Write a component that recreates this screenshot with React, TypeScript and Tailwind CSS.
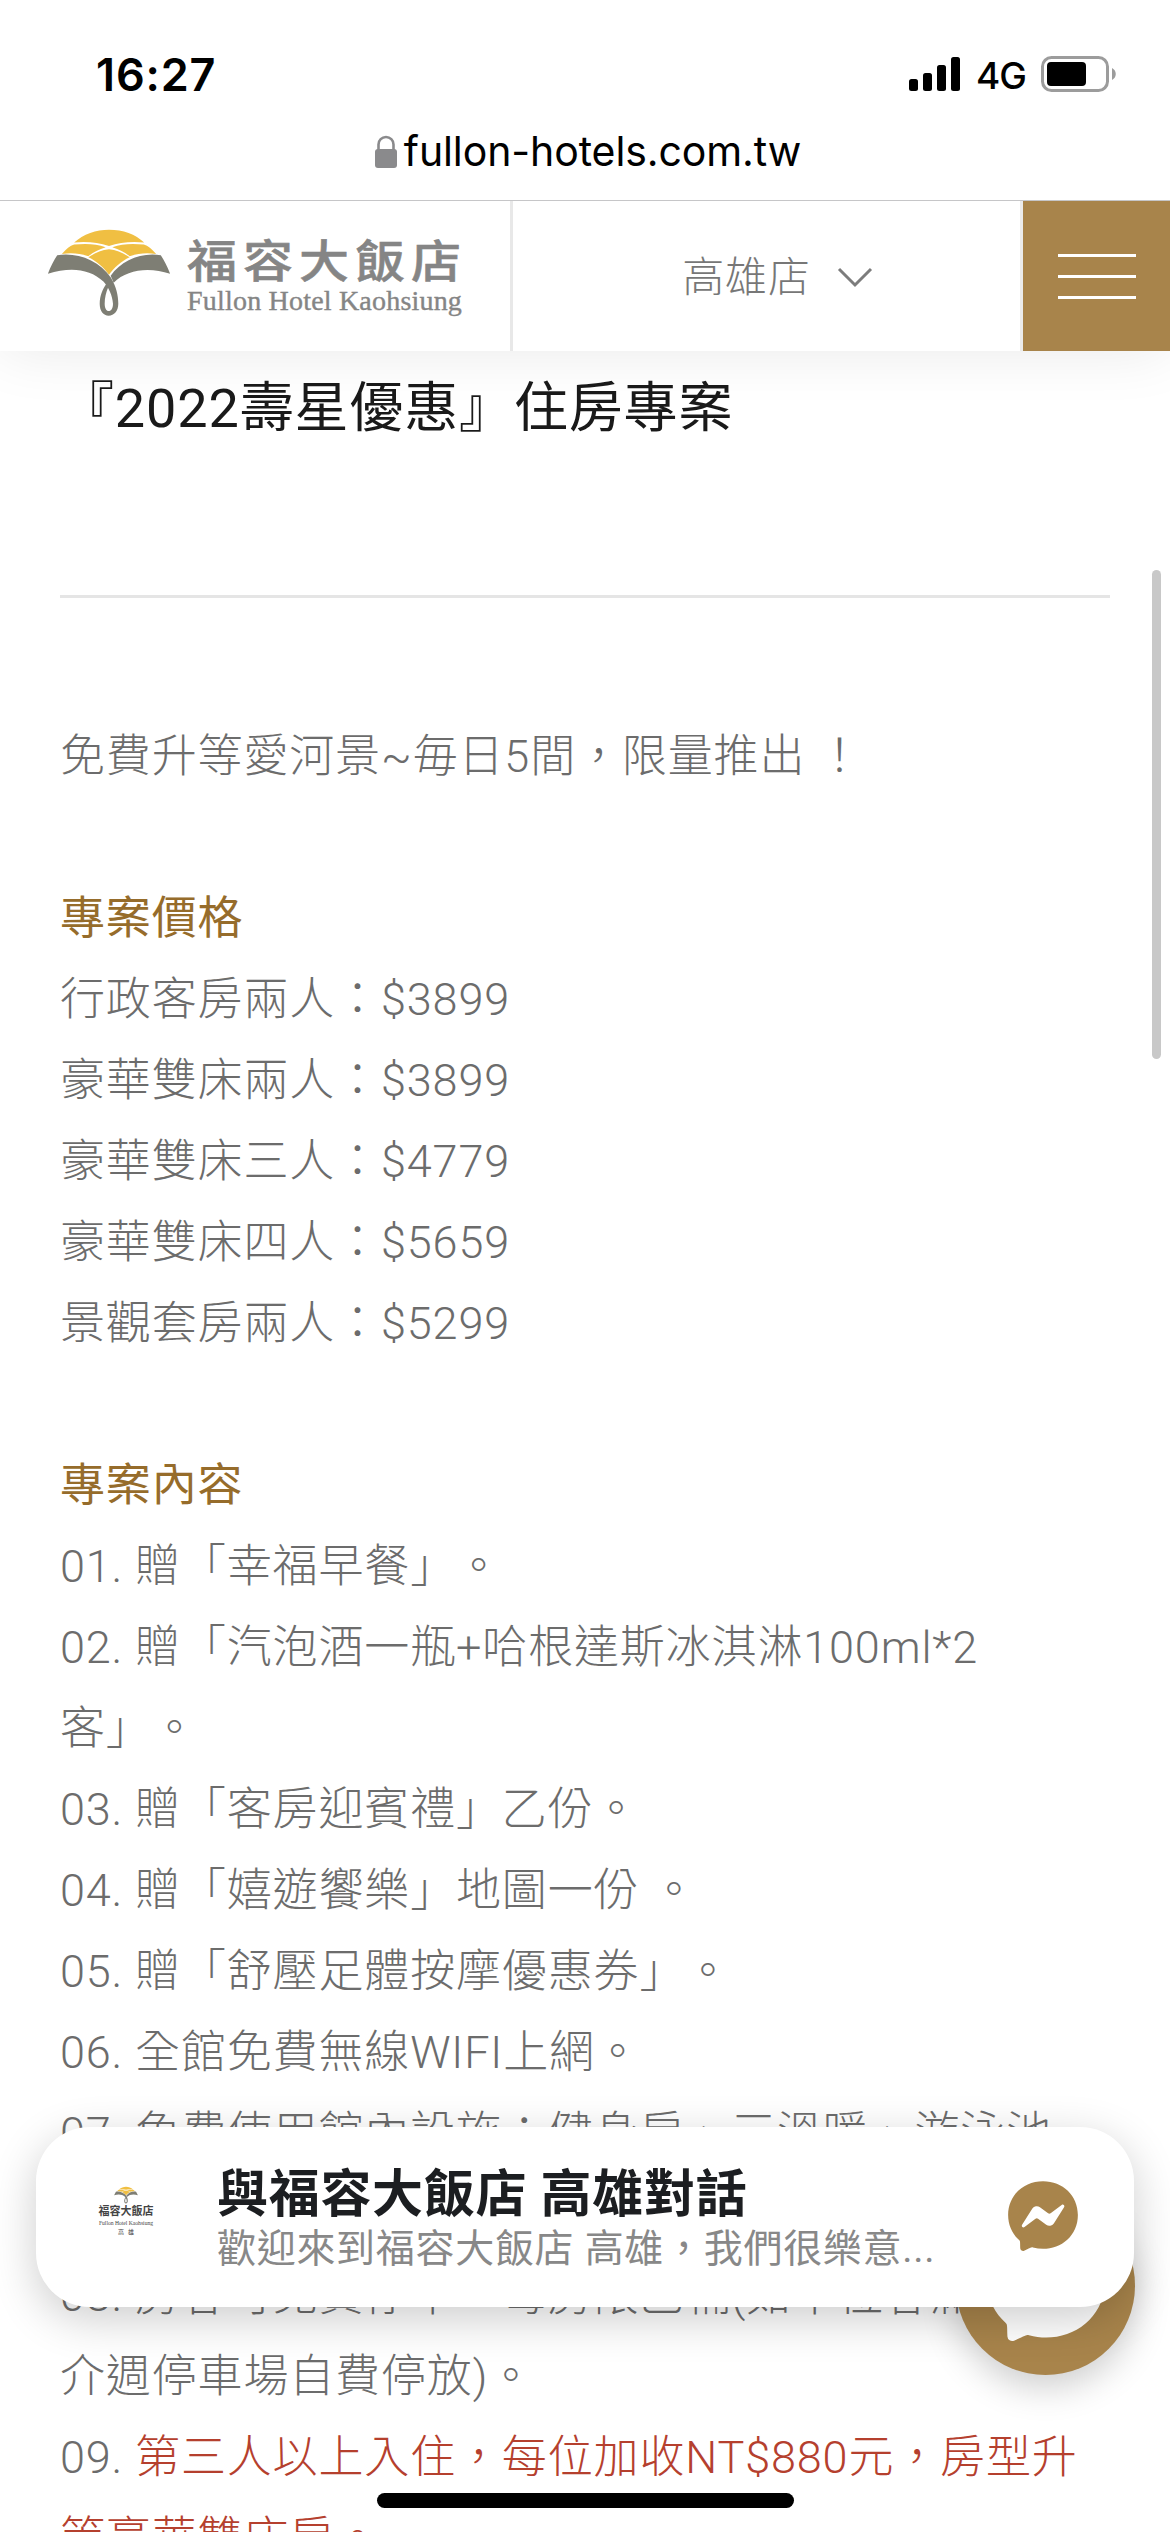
import { FaFacebookMessenger } from 'react-icons/fa';

const prices = [
  '行政客房兩人：$3899',
  '豪華雙床兩人：$3899',
  '豪華雙床三人：$4779',
  '豪華雙床四人：$5659',
  '景觀套房兩人：$5299',
];

const contents = [
  ['01. 贈「幸福早餐」。'],
  ['02. 贈「汽泡酒一瓶+哈根達斯冰淇淋100ml*2', '客」。'],
  ['03. 贈「客房迎賓禮」乙份。'],
  ['04. 贈「嬉遊饗樂」地圖一份 。'],
  ['05. 贈「舒壓足體按摩優惠券」。'],
  ['06. 全館免費無線WIFI上網。'],
  ['07. 免費使用館內設施：健身房、三溫暖、游泳池', '、兒童遊戲室。'],
  ['08. 房客可免費停車，每房限乙輛(如車位客滿可', '介週停車場自費停放)。'],
];

const StatusBar = () => (
  <div className="flex h-[108px] items-end justify-between pl-[96px] pr-[53px] font-[Inter] text-black">
    <span className="text-[45px] leading-[66px] font-semibold">16:27</span>
    <div className="flex h-[68px] items-center">
      <svg width="52" height="34" viewBox="0 0 52 34">
        <rect x="0" y="22" width="9" height="12" rx="2.5" />
        <rect x="14" y="16" width="9" height="18" rx="2.5" />
        <rect x="28" y="8" width="9" height="26" rx="2.5" />
        <rect x="42" y="0" width="9" height="34" rx="2.5" />
      </svg>
      <span className="mt-0.5 ml-[15px] text-[37px] leading-none font-medium tracking-tight">4G</span>
      <svg className="ml-[15px]" width="76" height="36" viewBox="0 0 76 36">
        <rect x="1.5" y="1.5" width="65" height="33" rx="9" fill="none" stroke="#9c9c9c" strokeWidth="3" />
        <rect x="6" y="6" width="39" height="24" rx="4" />
        <path d="M71 12c5 2.500 5 9.500 0 12z" fill="#9c9c9c" />
      </svg>
    </div>
  </div>
);

const AddressBar = () => (
  <div className="flex h-[93px] items-start justify-center border-b border-[#c6c6c8] pt-[18px] pl-1.5 font-[Inter]">
    <svg className="mt-[9px] mr-[7px]" width="22" height="33" viewBox="0 0 22 33">
      <rect x="0" y="14" width="22" height="19" rx="3" fill="#8a8a8c" />
      <path d="M3.500 15V9.500a7.500 7.500 0 0 1 15 0V15" fill="none" stroke="#8a8a8c" strokeWidth="2.600" />
    </svg>
    <span className="text-[41px] leading-[51px] tracking-[-0.1px] text-black">fullon-hotels.com.tw</span>
  </div>
);

const Emblem = ({ className }: { className: string }) => (
  <svg className={className} viewBox="22 25 372 262">
    <g fill="#f0bf42">
      <path d="M103 66C130 40 170 27 208 27C250 27 288 40 314 66C275 62 240 66 208 76C175 66 140 62 103 66z" />
      <path d="M66 100C80 85 90 76 103 72C140 68 170 70 198 80C178 86 160 95 146 107C120 98 95 96 66 100z" />
      <path d="M350 100C336 85 326 76 313 72C276 68 246 70 218 80C238 86 256 95 270 107C296 98 321 96 350 100z" />
      <path d="M146 110C165 98 185 88 208 86C231 88 251 98 270 110C245 122 222 142 208 163C194 142 171 122 146 110z" />
    </g>
    <g fill="#7e7e74">
      <path d="M24 160C32 138 42 120 52 104C110 94 178 118 214 172C230 200 236 225 236 250C236 272 223 286 207 286C191 286 180 272 180 250C180 225 190 205 200 190L206 200C199 215 195 235 195 250C195 263 200 272 207 272C215 272 220 263 220 250C218 224 207 202 192 184C150 144 90 139 24 160z" />
      <path d="M392 160C384 138 374 120 364 104C305 94 245 120 213 166L222 187C262 146 330 139 392 160z" />
    </g>
  </svg>
);

const Navbar = () => (
  <nav className="relative z-10 flex h-[150px] bg-white shadow-[0_0_60px_rgba(0,0,0,0.09)]">
    <div className="flex w-[513px] items-start border-r-3 border-[#e8e8e8] pt-7 pl-[47px]">
      <Emblem className="h-[87px] w-[124px]" />
      <div className="mt-[11px] ml-4 text-[#858585]">
        <p className="scale-y-90 text-[50px] leading-[46px] font-medium tracking-[6px] [-webkit-text-stroke:0.6px_#858585]">
          福容大飯店
        </p>
        <p className="font-['Liberation_Serif'] text-[28px] leading-[29px] tracking-[0.2px] [-webkit-text-stroke:0.4px_#858585]">
          Fullon Hotel Kaohsiung
        </p>
      </div>
    </div>
    <button className="flex w-[510px] items-center justify-center border-r-3 border-[#ebebeb] pt-[3px] pl-[22px] text-[42px] font-light text-[#777]">
      高雄店
      <svg className="ml-[26px]" width="36" height="22" viewBox="0 0 36 22">
        <path d="M2 2L18 18L34 2" fill="none" stroke="#7c7c7c" strokeWidth="3" />
      </svg>
    </button>
    <button className="flex flex-1 flex-col items-center justify-center gap-[18px] bg-[#a8844b]">
      <span className="h-[3px] w-[78px] bg-white" />
      <span className="h-[3px] w-[78px] bg-white" />
      <span className="h-[3px] w-[78px] bg-white" />
    </button>
  </nav>
);

const ChatPrompt = () => (
  <div className="absolute top-[2127px] left-9 flex h-[180px] w-[1098px] items-center rounded-[54px] bg-white shadow-[0_12px_45px_rgba(0,0,0,0.2)]">
    <div className="mb-3 ml-[60px] flex w-[60px] flex-col items-center text-[#444]">
      <Emblem className="h-[18px] w-[24px]" />
      <p className="text-[11px] leading-[16px] font-bold tracking-normal">福容大飯店</p>
      <p className="font-['Liberation_Serif'] text-[5.6px] leading-[7px] whitespace-nowrap tracking-normal">Fullon Hotel Kaohsiung</p>
      <p className="pl-1 text-[6px] leading-[9px] tracking-[4px]">高雄</p>
    </div>
    <div className="mt-[6px] ml-[61px] w-[740px] tracking-[0.7px]">
      <p className="text-[51px] leading-[57px] font-bold text-[#1c1e21]">與福容大飯店 高雄對話</p>
      <p className="text-[39px] leading-[52px] text-[#888]">歡迎來到福容大飯店 高雄，我們很樂意...</p>
    </div>
    <FaFacebookMessenger className="mb-0.5 ml-[50px] size-[72px] text-[#a8844b]" />
  </div>
);

const App = () => {
  return (
    <div className="relative h-[2532px] w-[1170px] overflow-hidden bg-white font-[Roboto,'Noto_Sans_CJK_TC',sans-serif] tracking-[0.85px] [text-spacing-trim:space-all]">
      <header className="relative z-20 bg-white">
        <StatusBar />
        <AddressBar />
      </header>
      <Navbar />

      <main className="px-[60px]">
        <h1 className="pt-[17px] text-[54px] leading-[81px] text-[#1a1a1a]">『2022壽星優惠』住房專案</h1>
        <hr className="mt-[146px] border-t-3 border-[#e5e5e5]" />
        <div className="pt-[118px] text-[45px] leading-[81px] font-light whitespace-pre text-[#6c6c6c]">
          <p>免費升等愛河景~毎日5間，限量推出 ！</p>
          <h2 className="mt-[81px] font-normal text-[#966c2b]">專案價格</h2>
          {prices.map((price) => (
            <p key={price}>{price}</p>
          ))}
          <h2 className="mt-[81px] font-normal text-[#966c2b]">專案內容</h2>
          {contents.flat().map((line) => (
            <p key={line}>{line}</p>
          ))}
          <p>
            09. <span className="text-[#b5402e]">第三人以上入住，每位加收NT$880元，房型升</span>
          </p>
          <p className="text-[#b5402e]">等豪華雙床房。</p>
        </div>
      </main>

      {/* floating chat button, partly under the prompt */}
      <div className="absolute top-[2196px] left-[956px] flex size-[179px] items-center justify-center rounded-full bg-[#a8844b] pb-2 shadow-[0_12px_36px_rgba(0,0,0,0.2)]">
        <FaFacebookMessenger className="size-[122px] text-white" />
      </div>
      <ChatPrompt />

      <div className="absolute top-[570px] left-[1152px] h-[489px] w-[9px] rounded-full bg-[#c8c8c8]" />
      <div className="absolute top-[2493px] left-[377px] h-[15px] w-[417px] rounded-full bg-black" />
    </div>
  );
};

export default App;
